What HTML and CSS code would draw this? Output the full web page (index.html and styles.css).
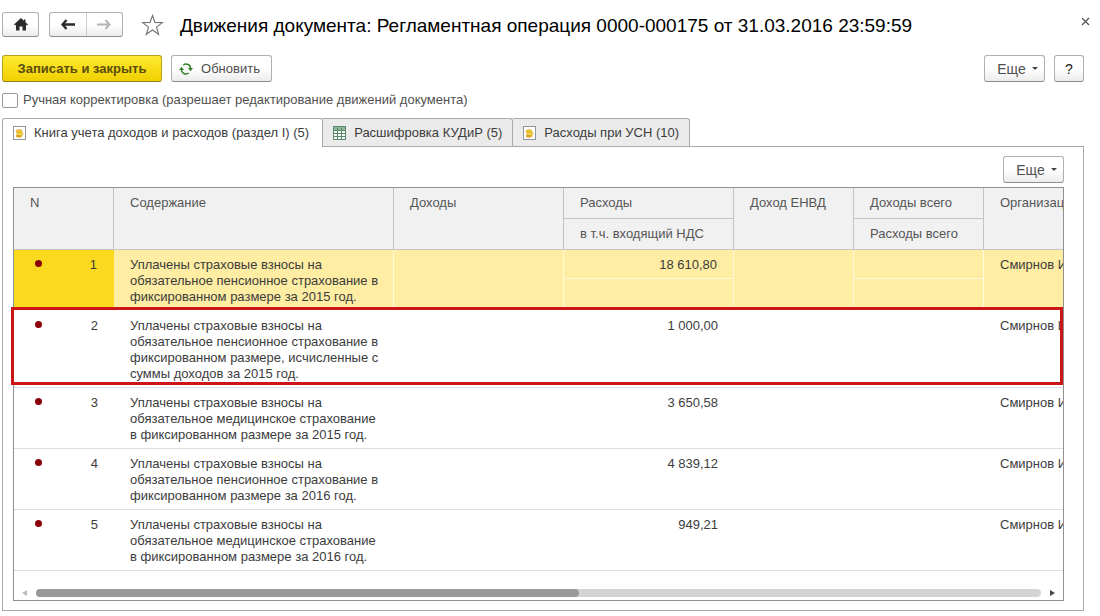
FILE: index.html
```html
<!DOCTYPE html>
<html lang="ru">
<head>
<meta charset="utf-8">
<meta name="viewport" content="width=device-width, initial-scale=1">
<title>Движения документа</title>
<link rel="stylesheet" href="styles.css">
</head>
<body>
<svg class="defs" aria-hidden="true">
  <symbol id="ledger" viewBox="0 0 13 14">
    <rect x=".5" y=".5" width="12" height="13" fill="#fff" stroke="#8e959c"/>
    <ellipse cx="6" cy="10" rx="3.200" ry="1.700" fill="#e0a92a"/>
    <ellipse cx="7" cy="7.800" rx="3.200" ry="1.700" fill="#f7d94c" stroke="#c8961a" stroke-width=".5"/>
    <ellipse cx="6" cy="5.200" rx="3.200" ry="1.600" fill="#f3cb3a" stroke="#c8961a" stroke-width=".5"/>
  </symbol>
  <symbol id="grid" viewBox="0 0 13 14">
    <rect x=".5" y=".5" width="12" height="13" fill="#f4faf5" stroke="#5d8a6b"/>
    <path d="M1 1h11v3H1z" fill="#8bb59a"/>
    <path d="M1 4.500h11M1 7.500h11M1 10.500h11M4.500 2v11M8.500 2v11" stroke="#5d8a6b" fill="none"/>
  </symbol>
</svg>

<header class="titlebar">
  <button class="btn home" aria-label="Начальная страница">
    <svg width="14" height="13" viewBox="0 0 14 13"><path d="M7 0 0 6.600l1 1L2 6.800V12.500h3.500V8.500h3v4H12V6.800l1 .8 1-1L11.500 4.200V1.500H10v1.300z" fill="#2b2b2b"/></svg>
  </button>
  <div class="nav">
    <button class="nav-btn" aria-label="Назад">
      <svg width="14" height="11" viewBox="0 0 14 11"><path d="M5.500 1 1.500 5.500l4 4.500M2 5.500h12" fill="none" stroke="#2b2b2b" stroke-width="2.400"/></svg>
    </button>
    <button class="nav-btn" aria-label="Вперед" disabled>
      <svg width="14" height="11" viewBox="0 0 14 11"><path d="M8.500 1l4 4.500-4 4.500M12 5.500H0" fill="none" stroke="#b4b4b4" stroke-width="2"/></svg>
    </button>
  </div>
  <button class="plain star" aria-label="В избранное">
    <svg width="23" height="22" viewBox="0 0 23 22"><path d="M11.500 1.500 14 8.400l7.300.2-5.800 4.500 2.100 7.100-6.100-4.200-6.100 4.200 2.100-7.100L1.700 8.600 9 8.400z" fill="#fff" stroke="#777" stroke-width="1.200"/></svg>
  </button>
  <h1 class="title">Движения документа: Регламентная операция 0000-000175 от 31.03.2016 23:59:59</h1>
  <button class="plain close" aria-label="Закрыть">
    <svg width="9" height="9" viewBox="0 0 9 9"><path d="M1 1l7 7M8 1 1 8" stroke="#555" stroke-width="1.300"/></svg>
  </button>
</header>

<main class="form">
  <div class="commands">
    <button class="btn primary">Записать и закрыть</button>
    <button class="btn refresh">
      <svg width="14" height="12" viewBox="0 0 14 12"><g fill="none" stroke="#35802a" stroke-width="1.500"><path d="M4.200 1.800C7.500.200 11.500 1.500 11.500 5.500"/><path d="M9.800 10.200C6.500 11.800 2.500 10.500 2.500 6.500"/></g><path d="M0 7h5L2.500 3.800zM9 5h5L11.500 8.200z" fill="#35802a"/></svg>
      Обновить
    </button>
    <span class="spacer"></span>
    <button class="btn more">Еще <span class="caret"></span></button>
    <button class="btn help" aria-label="Справка">?</button>
  </div>

  <label class="check"><input type="checkbox">Ручная корректировка (разрешает редактирование движений документа)</label>

  <div class="tabs" role="tablist">
    <button class="tab active" role="tab" aria-selected="true"><svg width="13" height="14"><use href="#ledger"/></svg>Книга учета доходов и расходов (раздел I) (5)</button>
    <button class="tab" role="tab" aria-selected="false"><svg width="13" height="14"><use href="#grid"/></svg>Расшифровка КУДиР (5)</button>
    <button class="tab" role="tab" aria-selected="false"><svg width="13" height="14"><use href="#ledger"/></svg>Расходы при УСН (10)</button>
  </div>

  <section class="panel" role="tabpanel">
    <div class="panel-bar"><button class="btn more">Еще <span class="caret"></span></button></div>
    <div class="list">
      <div class="viewport">
        <table class="grid">
          <colgroup><col class="c-num"><col class="c-text"><col class="c-sum"><col class="c-sum"><col class="c-mid"><col class="c-total"><col class="c-org"></colgroup>
          <thead>
            <tr><th rowspan="2">N</th><th rowspan="2">Содержание</th><th rowspan="2">Доходы</th><th>Расходы</th><th rowspan="2">Доход ЕНВД</th><th>Доходы всего</th><th rowspan="2">Организац</th></tr>
            <tr><th>в т.ч. входящий НДС</th><th>Расходы всего</th></tr>
          </thead>
          <tbody>
            <tr class="selected"><td><div class="num"><i class="dot"></i>1</div></td><td>Уплачены страховые взносы на обязательное пенсионное страхование в фиксированном размере за 2015 год.</td><td></td><td class="split"><div class="half">18 610,80</div></td><td></td><td class="split"><div class="half"></div></td><td>Смирнов И</td></tr>
            <tr><td><div class="num"><i class="dot"></i>2</div></td><td>Уплачены страховые взносы на обязательное пенсионное страхование в фиксированном размере, исчисленные с суммы доходов за 2015 год.</td><td></td><td class="sum">1 000,00</td><td></td><td></td><td>Смирнов И</td></tr>
            <tr><td><div class="num"><i class="dot"></i>3</div></td><td>Уплачены страховые взносы на обязательное медицинское страхование в фиксированном размере за 2015 год.</td><td></td><td class="sum">3 650,58</td><td></td><td></td><td>Смирнов И</td></tr>
            <tr><td><div class="num"><i class="dot"></i>4</div></td><td>Уплачены страховые взносы на обязательное пенсионное страхование в фиксированном размере за 2016 год.</td><td></td><td class="sum">4 839,12</td><td></td><td></td><td>Смирнов И</td></tr>
            <tr><td><div class="num"><i class="dot"></i>5</div></td><td>Уплачены страховые взносы на обязательное медицинское страхование в фиксированном размере за 2016 год.</td><td></td><td class="sum">949,21</td><td></td><td></td><td>Смирнов И</td></tr>
          </tbody>
        </table>
      </div>
      <div class="scroll">
        <span class="arrow left"></span>
        <div class="track"><div class="thumb"></div></div>
        <span class="arrow right"></span>
      </div>
      <div class="marker"></div>
    </div>
  </section>
</main>
</body>
</html>
```
FILE: styles.css
```css
* { box-sizing: border-box; }
body {
  margin: 0;
  background: #fff;
  color: #3c3c3c;
  font: 13px/16px "Liberation Sans", Arial, sans-serif;
}
button { font: inherit; color: inherit; margin: 0; padding: 0; }
svg { display: block; flex: none; }
.defs { position: absolute; width: 0; height: 0; }

.titlebar {
  display: flex;
  align-items: center;
  padding: 10px 9px 0 2px;
  height: 39px;
}
.btn {
  display: flex;
  align-items: center;
  justify-content: center;
  height: 27px;
  border: 1px solid #b0b0b0;
  border-bottom-color: #8c8c8c;
  border-radius: 3px;
  background: linear-gradient(#fff 50%, #ececec);
  color: #505050;
}
.home { width: 37px; height: 25px; margin-right: 10px; }
.nav {
  display: flex;
  width: 74px;
  height: 25px;
  border: 1px solid #b0b0b0;
  border-bottom-color: #8c8c8c;
  border-radius: 3px;
  background: linear-gradient(#fff 50%, #ececec);
}
.nav-btn {
  flex: 1;
  display: flex;
  align-items: center;
  justify-content: center;
  border: 0;
  background: none;
}
.nav-btn + .nav-btn { border-left: 1px solid #ccc; }
.plain { border: 0; background: none; }
.star { margin: 0 16px 0 18px; }
.title { margin: 0; padding-top: 2px; flex: 1; font-size: 19px; line-height: 24px; font-weight: 400; color: #000; white-space: nowrap; }
.close { padding: 1px; align-self: flex-start; margin-top: 6px; }

.form { padding: 16px 16px 0 2px; }
.commands { display: flex; gap: 9px; }
.spacer { flex: 1; }
.primary {
  width: 160px;
  border-color: #b59f1c;
  border-bottom-color: #8f7d12;
  background: linear-gradient(#ffe931, #f0d000);
  color: #5a4d0c;
  font-weight: 700;
}
.refresh { width: 101px; gap: 8px; padding-right: 4px; }
.more { width: 61px; gap: 6px; padding-left: 6px; font-size: 14px; }
.help { width: 30px; color: #222; font-size: 14px; }
.caret { border: 3px solid transparent; border-top-color: #444; border-bottom: 0; }

.check { display: flex; align-items: center; gap: 5px; margin-top: 8px; height: 20px; color: #505050; }
.check input {
  appearance: none;
  width: 16px;
  height: 15px;
  margin: 0;
  border: 1px solid #999;
  border-radius: 2px;
  background: #fff;
}

.tabs { display: flex; margin-top: 8px; }
.tab {
  display: flex;
  align-items: center;
  gap: 8px;
  height: 28px;
  padding: 0 10px;
  border: 1px solid #a6aba6;
  border-left: 0;
  border-bottom: 0;
  border-radius: 0 3px 0 0;
  background: #ebebeb;
}
.tab.active {
  position: relative;
  height: 29px;
  margin-bottom: -1px;
  padding-right: 13px;
  border-left: 1px solid #a6aba6;
  border-radius: 3px 3px 0 0;
  background: #fff;
}
.panel { padding: 9px 19px 9px 10px; border: 1px solid #a6aba6; }
.panel-bar { display: flex; justify-content: flex-end; margin-bottom: 4px; }

.list { position: relative; border: 1px solid #909090; }
.viewport { overflow: hidden; }
.grid { width: 1130px; min-width: 100%; table-layout: fixed; border-collapse: separate; border-spacing: 0; }
.c-num { width: 100px; }
.c-text { width: 280px; }
.c-sum { width: 170px; }
.c-mid { width: 120px; }
.c-total { width: 130px; }
.grid th {
  height: 31px;
  padding: 7px 16px;
  border-right: 1px solid #c4c4c4;
  border-bottom: 1px solid #c4c4c4;
  background: #f1f1f1;
  color: #555;
  font-weight: 400;
  text-align: left;
  vertical-align: top;
  white-space: nowrap;
}
.grid td { padding: 7px 16px 5px; border-bottom: 1px solid #dedede; vertical-align: top; }
.grid td:nth-child(2) { padding-right: 14px; }
.num { display: flex; justify-content: space-between; padding-left: 5px; }
.dot { width: 7px; height: 7px; margin-top: 3px; border-radius: 50%; background: #8b0008; }
.sum { text-align: right; }
.selected td { background: #feeda2; border-right: 1px solid #fff9dc; border-bottom-color: #fff; }
.selected td:first-child { background: #fbd91e; border-right-color: #fbd91e; }
.grid .split { padding: 0; }
.half { height: 29px; padding: 7px 16px 5px; border-bottom: 1px solid #fff9dc; text-align: right; }

.scroll { display: flex; align-items: center; gap: 9px; height: 29px; padding: 15px 8px 0; }
.scroll .track { flex: 1; height: 8px; border-radius: 4px; background: #d4d4d4; }
.thumb { width: 54%; height: 8px; border-radius: 4px; background: #999; }
.arrow { border: 3px solid transparent; }
.arrow.left { border-right: 5px solid #bbb; border-left: 0; }
.arrow.right { border-left: 5px solid #444; border-right: 0; }

.marker {
  position: absolute;
  top: 119px;
  left: -3px;
  right: 0;
  height: 78px;
  border: 3px solid #cb1517;
  pointer-events: none;
}
```
